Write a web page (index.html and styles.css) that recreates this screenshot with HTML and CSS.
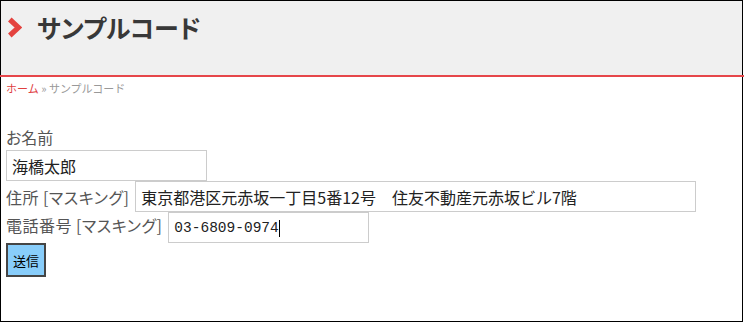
FILE: index.html
```html
<!DOCTYPE html>
<html lang="ja">

<head>
    <meta charset="UTF-8">
    <meta name="viewport" content="width=device-width, initial-scale=1.0">
    <title>サンプルコード</title>
    <link rel="stylesheet" href="styles.css">
</head>

<body>
    <div class="frame">
        <header class="page-header">
            <svg class="chevron" width="15" height="21" viewBox="0 0 15 21">
                <path d="M2.8 2.5 L11.5 10.5 L2.8 18.5" fill="none" stroke="#e4433f" stroke-width="5.2" stroke-linejoin="miter"/>
            </svg>
            <h1 class="page-title">サンプルコード</h1>
        </header>
        <div class="rule"></div>

        <div class="breadcrumb">
            <a class="crumb-home" href="#">ホーム</a> <span class="crumb-sep">»</span> <span class="crumb-current">サンプルコード</span>
        </div>

        <form class="sample-form" onsubmit="return false">
            <div class="field-label">お名前</div>
            <div class="row">
                <input type="text" class="field name-field" value="海橋太郎">
            </div>
            <div class="row">
                <label class="row-label">住所 [マスキング]</label>
                <input type="text" class="field address-field" value="東京都港区元赤坂一丁目5番12号　住友不動産元赤坂ビル7階">
            </div>
            <div class="row">
                <label class="row-label">電話番号 [マスキング]</label>
                <span class="caret-wrap">
                    <input type="text" class="field phone-field" value="03-6809-0974">
                    <span class="caret"></span>
                </span>
            </div>
            <button type="submit" class="submit-btn">送信</button>
        </form>
    </div>
</body>

</html>
```

FILE: styles.css
```css
body {
    margin: 0;
    font-family: "Noto Sans CJK JP", "Noto Sans", sans-serif;
    font-feature-settings: "palt";
    background: #fff;
}

.frame {
    width: 743px;
    height: 322px;
    border: 1px solid #000;
    box-sizing: border-box;
}

.page-header {
    height: 74px;
    background-color: #f0f0f0;
    display: flex;
    align-items: flex-start;
    padding: 16px 0 0 6px;
    box-sizing: border-box;
}

.chevron {
    display: block;
}

.page-title {
    margin: -6px 0 0 15px;
    font-size: 25px;
    font-weight: bold;
    line-height: 32px;
    color: #383838;
}

.rule {
    height: 2px;
    background-color: #e6464a;
    margin: 0 -3px 0 -1px;
}

.breadcrumb {
    margin-top: 2px;
    padding-left: 5px;
    font-size: 11px;
    line-height: 18px;
    color: #999;
    font-feature-settings: normal;
}

.crumb-home {
    color: #e0403f;
    text-decoration: none;
}

.sample-form {
    padding: 28px 0 0 5px;
}

.field-label {
    font-size: 16px;
    line-height: 24px;
    color: #555;
    margin-bottom: 1px;
}

.row {
    display: flex;
    align-items: baseline;
}

.row-label {
    font-size: 16px;
    line-height: 24px;
    letter-spacing: 0.5px;
    color: #555;
    margin-right: 6px;
}

.field {
    height: 31px;
    box-sizing: border-box;
    border: 1px solid #ccc;
    padding: 0 5px;
    font-family: "Noto Sans CJK JP", sans-serif;
    font-size: 16px;
    color: #222;
    outline: none;
}

.name-field {
    width: 201px;
}

.address-field {
    width: 561px;
}

.phone-field {
    width: 201px;
    font-family: "Liberation Mono", monospace;
    font-size: 14.5px;
}

.caret-wrap {
    position: relative;
    display: inline-block;
}

.caret {
    position: absolute;
    left: 111px;
    top: 8px;
    width: 1px;
    height: 17px;
    background: #000;
}

.submit-btn {
    display: block;
    width: 40px;
    height: 34px;
    padding: 0;
    border: 2px solid #454545;
    background-color: #88cdfa;
    font-family: "Noto Sans CJK JP", sans-serif;
    font-size: 13px;
    color: #000;
}
```
